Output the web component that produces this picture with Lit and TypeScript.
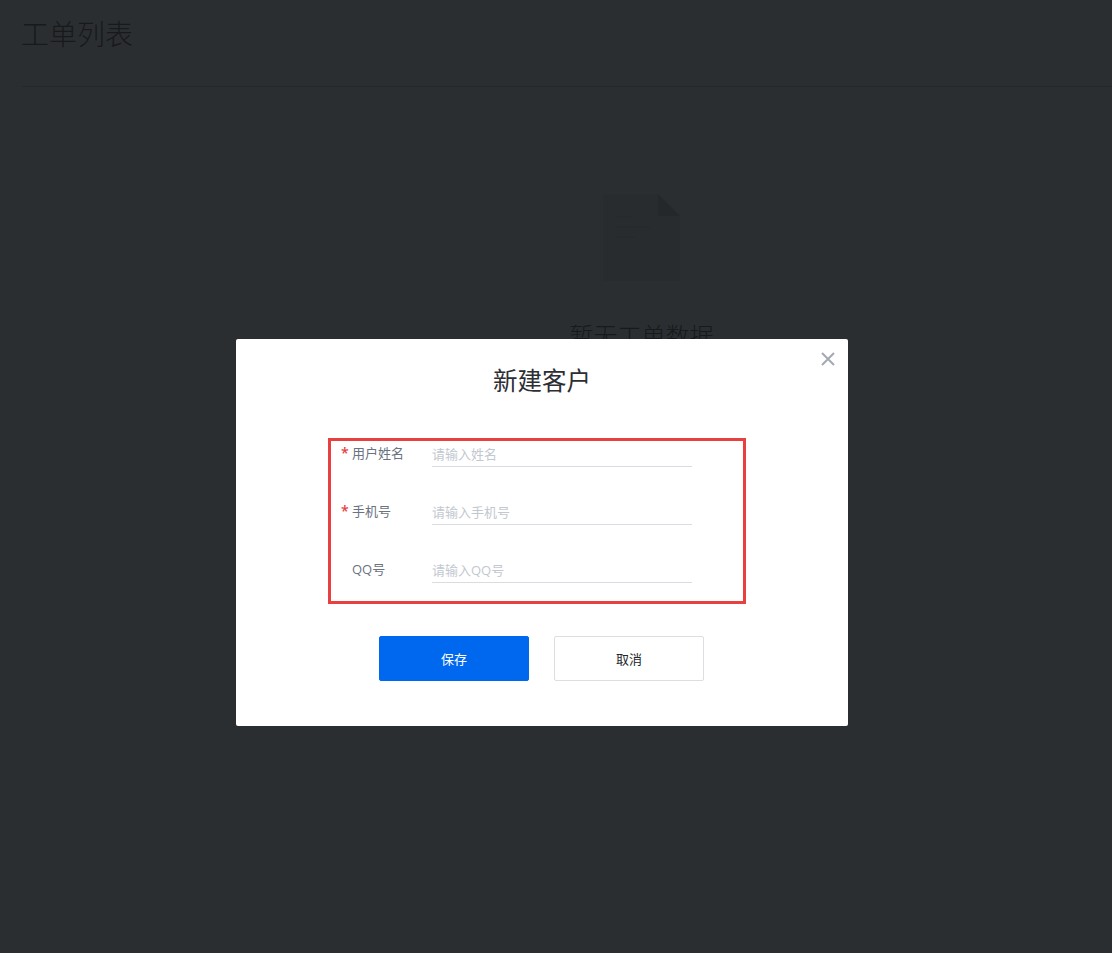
import { LitElement, html, css } from "lit";
import { customElement } from "lit/decorators.js";

@customElement("app-root")
export class AppRoot extends LitElement {
  static styles = css`
    :host {
      display: block;
      position: relative;
      width: 1112px;
      height: 953px;
      overflow: hidden;
      background: #2b2e31;
      font-family: "Open Sans", "Noto Sans CJK SC", sans-serif;
      font-weight: 300;
    }
    .page { display: flex; flex-direction: column; padding-left: 22px; }
    .page-title {
      height: 87px;
      box-sizing: border-box;
      margin: 0;
      padding-top: 14px;
      font-size: 28px;
      line-height: 40px;
      font-weight: 300;
      color: #17191b;
      border-bottom: 1px solid #25282b;
      text-indent: -1px;
    }
    .empty {
      display: flex;
      flex-direction: column;
      align-items: center;
      width: 1239px;
      padding-top: 107px;
    }
    .empty svg { display: block; }
    .empty-text { margin-top: 38px; font-size: 24px; line-height: 34px; color: #17191b; }
    .overlay {
      position: absolute;
      inset: 0;
      padding: 339px 0 0 236px;
      box-sizing: border-box;
    }
    .modal {
      position: relative;
      width: 612px;
      height: 387px;
      box-sizing: border-box;
      background: #fff;
      border-radius: 2px;
      padding-top: 25px;
      display: flex;
      flex-direction: column;
      align-items: center;
    }
    .close {
      position: absolute;
      top: 13px;
      right: 13px;
      width: 14px;
      height: 14px;
      padding: 0;
      border: 0;
      background: none;
      display: block;
    }
    .close svg { display: block; }
    .modal-title {
      margin: 0;
      font-size: 24.5px;
      line-height: 34px;
      font-weight: 400;
      color: #2c2e33;
    }
    .form {
      box-sizing: border-box;
      width: 418px;
      height: 166px;
      margin: 40px 10px 0 0;
      border: 3px solid #e8403f;
      padding: 0 0 0 10px;
      display: flex;
      flex-direction: column;
      gap: 29px;
    }
    .row { display: flex; height: 29px; margin-top: -1px; }
    .row + .row { margin-top: 0; }
    .star {
      width: 11px;
      padding-top: 3px;
      font-size: 14px;
      font-weight: 600;
      line-height: 20px;
      color: #e8403f;
    }
    .label {
      width: 80px;
      padding-top: 3px;
      font-size: 13px;
      line-height: 20px;
      color: #6b7280;
      font-weight: 400;
    }
    .input {
      box-sizing: border-box;
      width: 260px;
      height: 27px;
      border-bottom: 1px solid #d9dce1;
      font-size: 13px;
      line-height: 28px;
      color: #c3c8d0;
      font-weight: 400;
    }
    .actions { display: flex; gap: 25px; margin-top: 32px; margin-right: 1px; }
    .btn {
      box-sizing: border-box;
      width: 150px;
      height: 45px;
      border-radius: 2px;
      font: inherit;
      font-size: 13px;
      font-weight: 400;
      padding: 0;
    }
    .primary { background: #0068ef; border: 1px solid #0068ef; color: #fff; }
    .ghost { background: #fff; border: 1px solid #dcdee2; color: #24262b; }
  `;

  render() {
    const fields = [
      { label: "用户姓名", ph: "请输入姓名", req: true },
      { label: "手机号", ph: "请输入手机号", req: true },
      { label: "QQ号", ph: "请输入QQ号", req: false },
    ];
    return html`
      <div class="page">
        <h1 class="page-title">工单列表</h1>
        <div class="empty">
          <svg width="77" height="87" viewBox="0 0 77 87">
            <path d="M0 0H55L77 22V87H0Z" fill="#292c2f" />
            <path d="M55 0L77 22H55Z" fill="#25282b" />
            <path d="M13 23H29M13 33H47M13 43H32" stroke="#27292c" stroke-width="1.5" fill="none" />
          </svg>
          <div class="empty-text">暂无工单数据</div>
        </div>
      </div>
      <div class="overlay">
        <div class="modal">
          <button class="close" aria-label="关闭">
            <svg width="14" height="14" viewBox="0 0 14 14">
              <path d="M1 1L13 13M13 1L1 13" stroke="#a4a9b3" stroke-width="2" fill="none" />
            </svg>
          </button>
          <h2 class="modal-title">新建客户</h2>
          <div class="form">
            ${fields.map(
              (f) => html`<div class="row">
                <span class="star">${f.req ? "*" : ""}</span>
                <span class="label">${f.label}</span>
                <div class="input">${f.ph}</div>
              </div>`
            )}
          </div>
          <div class="actions">
            <button class="btn primary">保存</button>
            <button class="btn ghost">取消</button>
          </div>
        </div>
      </div>
    `;
  }
}
